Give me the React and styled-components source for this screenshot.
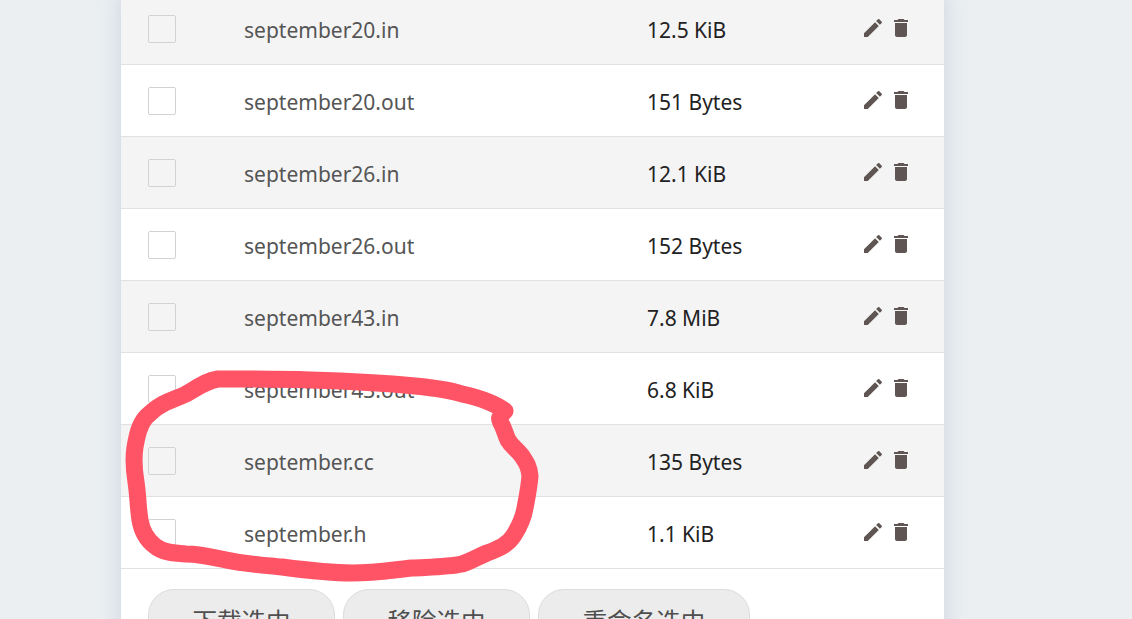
import React from "react";
import styled, { createGlobalStyle } from "styled-components";
import { MdEdit, MdDelete } from "react-icons/md";

const Global = createGlobalStyle`
  html, body { margin: 0; height: 619px; overflow: hidden; background: #ebeff2; }
  body { font-family: "Noto Sans", "Noto Sans CJK SC", sans-serif; }
`;

const Page = styled.div`
  position: relative;
  height: 619px;
  overflow: hidden;
  padding-left: 121px;
`;

const Card = styled.main`
  width: 823px;
  margin-top: -7px;
  background: #fff;
  box-shadow: 0 0 20px rgba(140, 160, 180, 0.35);
`;

const Row = styled.div`
  display: grid;
  grid-template-columns: 96px 403px 216px auto;
  align-items: center;
  height: 71px;
  padding-left: 27px;
  border-bottom: 1px solid #e1e1e1;
  background: ${(p) => (p.$odd ? "#f4f4f4" : "#fff")};
`;

const Check = styled.span`
  display: block;
  width: 26px;
  height: 26px;
  border: 1px solid #d2d2d2;
  border-radius: 2px;
`;

const Name = styled.span`
  font-size: 21px;
  line-height: 28px;
  padding-top: 2px;
  color: #555;
`;

const Size = styled.span`
  font-size: 21px;
  line-height: 28px;
  padding-top: 2px;
  color: #222;
`;

const Actions = styled.span`
  display: flex;
  gap: 4px;
  margin: 0 0 2px -2px;
  color: #5f5553;
  font-size: 24px;
`;

const Toolbar = styled.div`
  display: flex;
  gap: 8px;
  padding: 20px 27px;
`;

const Pill = styled.button`
  width: ${(p) => p.$w}px;
  height: 62px;
  padding: 0;
  box-sizing: border-box;
  align-self: flex-start;
  border: 1px solid #dcdcdc;
  border-radius: 26px;
  background: #ececec;
  color: #4f4f4f;
  font: 24.5px "Noto Sans CJK SC", sans-serif;
`;

const Scribble = styled.svg`
  position: absolute;
  inset: 0;
  pointer-events: none;
`;

const files = [
  ["september20.in", "12.5 KiB"],
  ["september20.out", "151 Bytes"],
  ["september26.in", "12.1 KiB"],
  ["september26.out", "152 Bytes"],
  ["september43.in", "7.8 MiB"],
  ["september43.out", "6.8 KiB"],
  ["september.cc", "135 Bytes"],
  ["september.h", "1.1 KiB"],
];

export default function App() {
  return (
    <>
      <Global />
      <Page>
        <Card>
          {files.map(([n, s], i) => (
            <Row key={n} $odd={i % 2 === 0}>
              <Check />
              <Name>{n}</Name>
              <Size>{s}</Size>
              <Actions>
                <MdEdit />
                <MdDelete />
              </Actions>
            </Row>
          ))}
          <Toolbar>
            <Pill $w={187}>下载选中</Pill>
            <Pill $w={187}>移除选中</Pill>
            <Pill $w={212}>重命名选中</Pill>
          </Toolbar>
        </Card>
        <Scribble width="1132" height="619" viewBox="0 0 1132 619">
          <path
            d="M505 411 C495 403 480 398 462 394 C450 390 435 388 415 386 C385 383 345 381 310 380 C280 379 245 379 218 379 C205 381 197 388 186 394 C178 398 170 400 163 404 C155 408 152 412 146 417 C139 425 137 436 135 447 C133 460 134 470 136 482 C138 495 138 508 140 520 C142 532 147 540 155 546 C162 552 172 553 186 554 C200 554 212 557 226 560 C245 564 262 565 282 567 C305 570 330 573 352 573 C375 573 392 570 412 568 C430 567 448 567 462 564 C472 561 477 557 487 553 C498 549 508 545 514 535 C519 527 523 520 525 508 C527 498 529 488 530 476 C529 466 526 462 522 456 C517 449 512 447 508 440 C505 434 504 428 501 423 C499 419 498 418 505 411"
            fill="none"
            stroke="#ff5466"
            strokeWidth="17"
            strokeLinecap="round"
            strokeLinejoin="round"
          />
        </Scribble>
      </Page>
    </>
  );
}
